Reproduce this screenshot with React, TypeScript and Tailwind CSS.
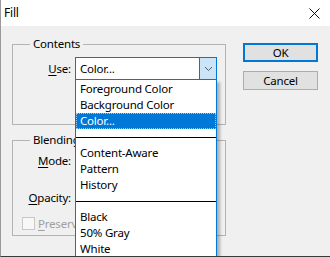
import { VFC } from 'react'

const font = "font-['Noto_Sans',sans-serif]"

const Chevron: VFC = () => (
    <svg width="9" height="6" viewBox="0 0 9 6" fill="none">
        <path d="M1 1 L4.5 4.5 L8 1" stroke="#5a5a5a" strokeWidth="1" />
    </svg>
)

const Item: VFC<{ label: string; active?: boolean }> = ({ label, active }) => (
    <div
        className={
            active
                ? 'h-[16px] leading-[14px] pl-[3px] bg-[#0078d7] text-white border border-dotted border-[#9cc8ee]'
                : 'h-[16px] leading-[16px] pl-[4px]'
        }
    >
        {label}
    </div>
)

const Separator: VFC = () => (
    <div className="h-[16px] flex items-center">
        <div className="h-px w-full bg-black" />
    </div>
)

const Label: VFC<{ first: string; rest: string }> = ({ first, rest }) => (
    <span className="w-[58px] text-right shrink-0">
        <span className="underline underline-offset-[2px]">{first}</span>
        {rest}
    </span>
)

const App: VFC = () => {
    return (
        <div
            className={`${font} text-[11.5px] tracking-[-0.2px] text-black w-[330px] h-[257px] bg-[#f0f0f0] border-l border-l-[#9a9a9a] border-b border-b-[#3a3a3a] flex flex-col overflow-hidden`}
        >
            {/* title bar */}
            <div className="h-[26px] bg-white flex items-center justify-between pl-[3px] pr-[10px] shrink-0">
                <span className="text-[12px]">Fill</span>
                <svg width="11" height="11" viewBox="0 0 11 11">
                    <path d="M0.5 0.5 L10.5 10.5 M10.5 0.5 L0.5 10.5" stroke="#111" strokeWidth="1" />
                </svg>
            </div>

            <div className="flex flex-1">
                {/* left column */}
                <div className="pl-[11px] pt-[10px]">
                    <fieldset className="w-[214px] h-[89px] border border-[#b4b4b4]">
                        <legend className="ml-[17px] px-[3px] h-[16px] leading-[16px]">Contents</legend>
                        <div className="flex items-center gap-[4px] mt-[5px]">
                            <Label first="U" rest="se:" />
                            <div className="relative">
                                <div className="w-[142px] h-[23px] bg-white border border-[#0078d7] flex items-center justify-between">
                                    <span className="pl-[4px]">Color...</span>
                                    <div className="w-[17px] h-full bg-[#cce4f7] border-l border-[#0078d7] flex items-center justify-center">
                                        <Chevron />
                                    </div>
                                </div>
                                {/* open dropdown list */}
                                <div className="absolute left-0 top-full -mt-px w-[142px] h-[200px] bg-white border border-[#0078d7] pt-px shadow-[3px_3px_3px_rgba(0,0,0,0.28)] z-10">
                                    <Item label="Foreground Color" />
                                    <Item label="Background Color" />
                                    <Item label="Color..." active />
                                    <Separator />
                                    <Item label="Content-Aware" />
                                    <Item label="Pattern" />
                                    <Item label="History" />
                                    <Separator />
                                    <Item label="Black" />
                                    <Item label="50% Gray" />
                                    <Item label="White" />
                                </div>
                            </div>
                        </div>
                    </fieldset>

                    <fieldset className="mt-[7px] w-[214px] h-[104px] border border-[#b4b4b4]">
                        <legend className="ml-[17px] px-[3px] h-[16px] leading-[16px]">Blending</legend>
                        <div className="flex items-center gap-[4px] mt-px h-[23px]">
                            <Label first="M" rest="ode:" />
                            <div className="w-[142px] h-[23px] bg-[#e5e5e5] border border-[#adadad]" />
                        </div>
                        <div className="flex items-center gap-[4px] mt-[14px] h-[23px]">
                            <Label first="O" rest="pacity:" />
                            <div className="w-[60px] h-[21px] bg-white border border-[#7a7a7a]" />
                        </div>
                        <div className="flex items-center mt-[8px] h-[13px] pl-[9px] text-[#a0a0a0]">
                            <div className="w-[13px] h-[13px] border border-[#c8c8c8] bg-[#f7f7f7] shrink-0" />
                            {/* the rest of the label sits under the open list */}
                            <span className="ml-[3px] w-[37px] overflow-hidden whitespace-nowrap">
                                <span className="underline underline-offset-[2px]">P</span>reserve
                            </span>
                        </div>
                    </fieldset>
                </div>

                {/* buttons */}
                <div className="ml-[17px] pt-[17px] flex flex-col gap-[9px]">
                    <button className="w-[75px] h-[19px] bg-[#e1e1e1] border-2 border-[#0078d7] leading-none">
                        OK
                    </button>
                    <button className="w-[75px] h-[19px] bg-[#e1e1e1] border border-[#adadad] leading-none">
                        Cancel
                    </button>
                </div>
            </div>
        </div>
    )
}

export default App
